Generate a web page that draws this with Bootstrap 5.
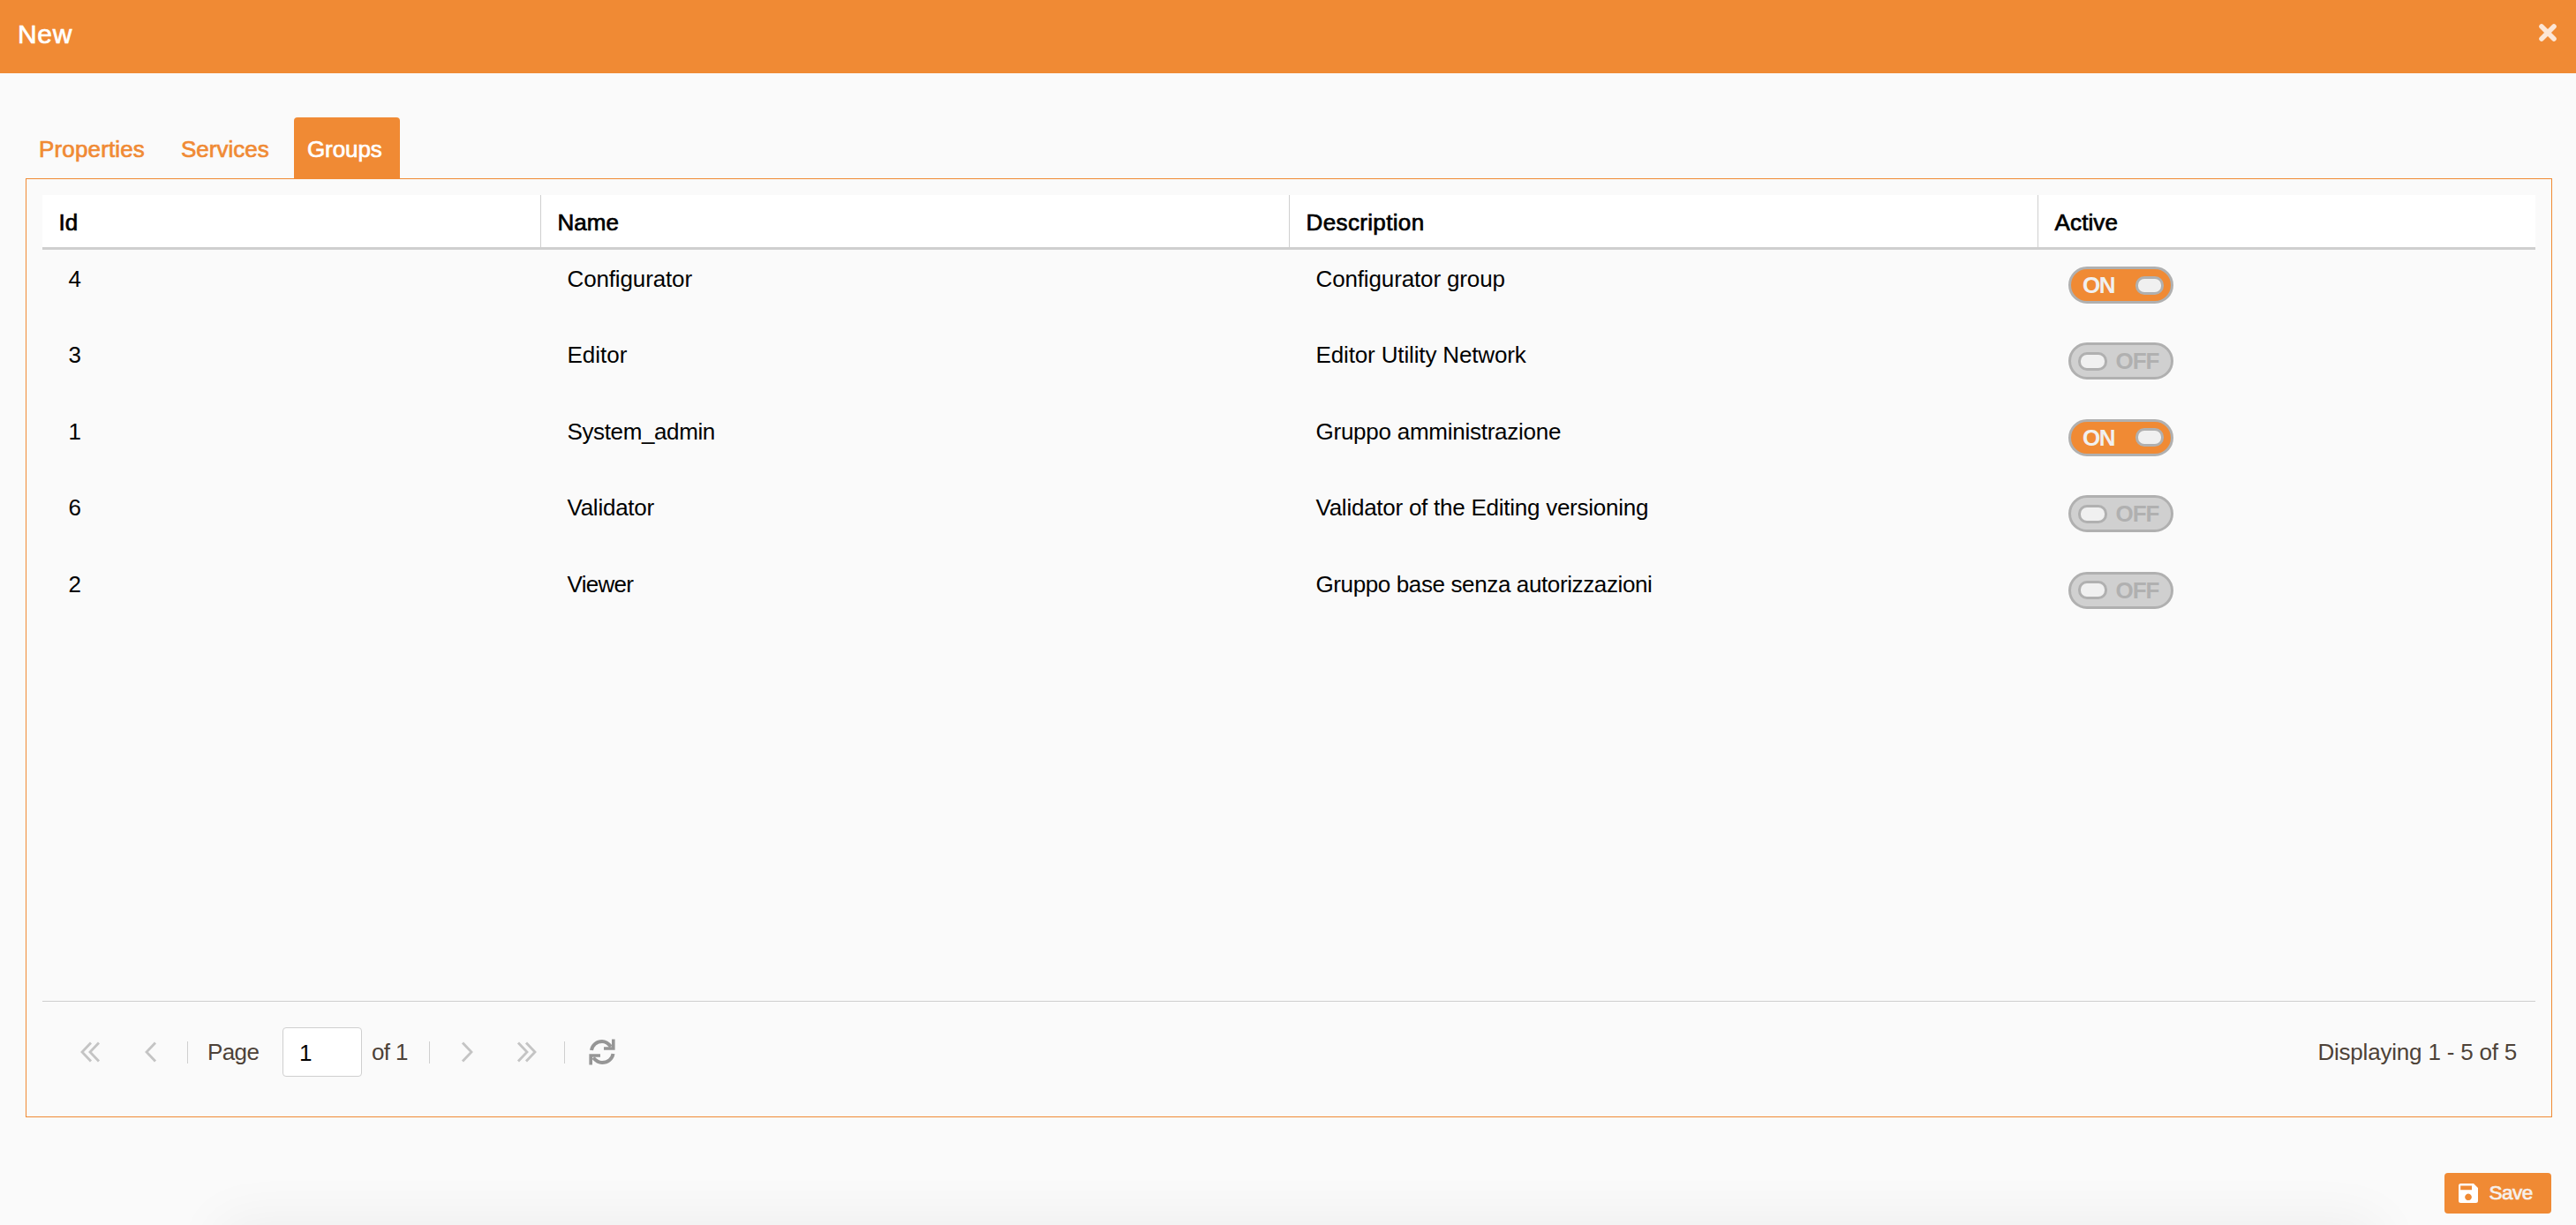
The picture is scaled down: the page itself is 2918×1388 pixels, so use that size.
<!DOCTYPE html>
<html lang="en">
<head>
<meta charset="utf-8">
<title>New</title>
<meta name="viewport" content="width=device-width, initial-scale=1">
<link href="https://cdn.jsdelivr.net/npm/bootstrap@5.3.0/dist/css/bootstrap.min.css" rel="stylesheet">
<style>
:root { --accent: #f08a34; --line: #cfcfcf; }
html, body { height: 100%; }
body { background: #fafafa; color: #000; font: 26px/30px "Liberation Sans", Arial, sans-serif; overflow: hidden; }
.window { height: 1388px; position: relative; overflow: hidden; }
.medium { -webkit-text-stroke: .7px currentColor; }
.titlebar { height: 83px; background: var(--accent); color: #fff; padding: 22px 22px 0 20px; }
.titlebar h1 { font-size: 30px; line-height: 34px; font-weight: 400; letter-spacing: .7px; }
.close-x { margin-top: 5px; width: 20px; height: 20px; }
.group-tabs { padding: 50px 0 0 29px; border: 0; }
.group-tabs .nav-link { height: 69px; margin: 0; padding: 21px 0 0 15px; border: 0; border-radius: 4px 4px 0 0; color: var(--accent); }
.group-tabs .nav-link.active { background: var(--accent); color: #fff; }
.tab-a { width: 161px; letter-spacing: .15px; }
.tab-b { width: 143px; }
.tab-c { width: 120px; letter-spacing: -.1px; }
.panel { margin: 0 27px 0 29px; height: 1064px; border: 1px solid var(--accent); padding: 18px 18px 0 18px; }
.grid-body { height: 914px; border-bottom: 1px solid var(--line); }
.group-table { table-layout: fixed; margin: 0; --bs-table-bg: transparent; color: #000; border-collapse: separate; border-spacing: 0; }
.group-table > thead > tr > th { height: 62px; padding: 16px 0 0 18.6px; font-weight: 400; vertical-align: top; background: #fff; border: 0; border-bottom: 3px solid var(--line); border-right: 1px solid var(--line); }
.group-table > thead > tr > th:last-child { border-right: 0; }
.group-table > tbody > tr > td { height: 86.4px; padding: 18px 0 0 29.5px; border: 0; vertical-align: top; letter-spacing: -.25px; }
.group-table > tbody > tr > td.ls0 { letter-spacing: 0; }
.group-table > tbody > tr > td.ls1 { letter-spacing: -.14px; }
.group-table > tbody > tr > td.ls3 { letter-spacing: -.38px; }
.group-table > tbody > tr > td.ls9 { letter-spacing: -.7px; }
.group-table > tbody > tr > td.toggle-cell { padding: 19px 0 0 34px; }
.toggle { width: 119px; height: 42px; border: 3px solid #b0b0b0; border-radius: 21px; font-weight: 700; line-height: 36px; }
.toggle .knob { width: 32px; height: 21px; border: 3px solid #b0b0b0; border-radius: 10px; background: #f0f0f0; }
.toggle.on { background: var(--accent); color: #f0f0f0; padding: 0 8px 0 13px; letter-spacing: -1.5px; }
.toggle.off { background: #d0d0d0; color: #b0b0b0; padding: 0 13.5px 0 8px; letter-spacing: -1px; }
.toggle.off .knob { width: 33px; }
.pager { height: 114px; color: #4d4238; }
.sep { width: 1px; height: 25px; background: var(--line); margin-top: 1px; }
.page-box { width: 90px; height: 56px; border: 1px solid var(--line); border-radius: 4px; padding: 2px 0 0 18px; font: 26px/30px "Liberation Sans", Arial, sans-serif; color: #000; background: #fff; }
.btn-save { width: 121px; height: 46px; margin: 63px 28px 0 auto; background: var(--accent); border-radius: 4px; padding: 0 0 0 16px; color: #f6f0ec; font-size: 22.5px; line-height: 26px; border: 0; letter-spacing: -.5px; position: relative; }
.btn-save svg { margin-right: 12.5px; }
/* soft shadow cast up from the lower edge of the window */
.under-glow { position: absolute; left: 254px; right: 229px; top: 1388px; height: 200px; box-shadow: 0 0 60px 4px rgba(0,0,0,.055); }
</style>
</head>
<body>
<div class="window">
  <div class="under-glow"></div>
  <header class="titlebar d-flex justify-content-between align-items-start">
    <h1 class="medium m-0">New</h1>
    <svg class="close-x" viewBox="0 0 20 20"><path d="M3 3 17 17M17 3 3 17" stroke="#fce6d6" stroke-width="5.6" stroke-linecap="round"/></svg>
  </header>
  <ul class="nav nav-tabs group-tabs medium">
    <li class="nav-item"><a class="nav-link tab-a">Properties</a></li>
    <li class="nav-item"><a class="nav-link tab-b">Services</a></li>
    <li class="nav-item"><a class="nav-link tab-c active">Groups</a></li>
  </ul>
  <main class="panel">
    <div class="grid-body">
      <table class="table group-table">
        <colgroup><col style="width:565px"><col style="width:848px"><col style="width:848px"><col></colgroup>
        <thead class="medium"><tr><th>Id</th><th>Name</th><th style="letter-spacing:.35px">Description</th><th style="letter-spacing:.1px">Active</th></tr></thead>
        <tbody>
          <tr><td>4</td><td class="ls1">Configurator</td><td class="ls1">Configurator group</td><td class="toggle-cell"><div class="toggle on d-flex justify-content-between align-items-center"><span>ON</span><span class="knob"></span></div></td></tr>
          <tr><td>3</td><td class="ls0">Editor</td><td class="ls1">Editor Utility Network</td><td class="toggle-cell"><div class="toggle off d-flex justify-content-between align-items-center"><span class="knob"></span><span>OFF</span></div></td></tr>
          <tr><td>1</td><td class="ls3">System_admin</td><td>Gruppo amministrazione</td><td class="toggle-cell"><div class="toggle on d-flex justify-content-between align-items-center"><span>ON</span><span class="knob"></span></div></td></tr>
          <tr><td>6</td><td>Validator</td><td>Validator of the Editing versioning</td><td class="toggle-cell"><div class="toggle off d-flex justify-content-between align-items-center"><span class="knob"></span><span>OFF</span></div></td></tr>
          <tr><td>2</td><td class="ls9">Viewer</td><td class="ls3">Gruppo base senza autorizzazioni</td><td class="toggle-cell"><div class="toggle off d-flex justify-content-between align-items-center"><span class="knob"></span><span>OFF</span></div></td></tr>
        </tbody>
      </table>
    </div>
    <footer class="pager d-flex align-items-center">
      <svg style="margin-left:42px" width="24" height="24" viewBox="0 0 24 24" fill="none" stroke="#c4c4c4" stroke-width="2.8"><path d="M13 1.5 3 12 13 22.5M22 1.5 12 12 22 22.5"/></svg>
      <svg style="margin-left:48px" width="16" height="24" viewBox="0 0 16 24" fill="none" stroke="#c4c4c4" stroke-width="2.8"><path d="M14 1.5 4 12 14 22.5"/></svg>
      <span class="sep" style="margin-left:34px"></span>
      <span style="margin-left:22px;width:85px;letter-spacing:-.6px">Page</span>
      <input class="page-box" value="1" aria-label="Page">
      <span style="margin-left:11px;width:65px;letter-spacing:-.6px">of 1</span>
      <span class="sep"></span>
      <svg style="margin-left:35px" width="16" height="24" viewBox="0 0 16 24" fill="none" stroke="#c4c4c4" stroke-width="2.8"><path d="M2 1.5 12 12 2 22.5"/></svg>
      <svg style="margin-left:47px" width="26" height="24" viewBox="0 0 26 24" fill="none" stroke="#c4c4c4" stroke-width="2.8"><path d="M2 1.5 12 12 2 22.5M11 1.5 21 12 11 22.5"/></svg>
      <span class="sep" style="margin-left:28px"></span>
      <svg style="margin-left:27px" width="30" height="30" viewBox="0 0 30 30" fill="none" stroke="#969696" stroke-width="4"><path d="M3 13C4 7 9 3 15 3C19 3 22 5 25 9M27.5 17C26.500 23 21.500 27 15 27C11 27 8 25 5 21.500"/><path d="M27.800 .5V11H17M2.200 29.500V19H13" stroke-width="3.600"/></svg>
      <span style="margin-left:auto;margin-right:21px;letter-spacing:-.2px">Displaying 1 - 5 of 5</span>
    </footer>
  </main>
  <button class="btn btn-save d-flex align-items-center medium">
    <svg width="22" height="22" viewBox="0 0 22 22"><path fill="#fff" fill-rule="evenodd" d="M2.500 0H17L22 5V19.500Q22 22 19.500 22H2.500Q0 22 0 19.500V2.500Q0 0 2.500 0ZM2.200 2.500V7.300H15V2.500ZM11 11.500a3.800 3.800 0 1 0 .01 0Z"/></svg>
    <span>Save</span>
  </button>
</div>
<script src="https://cdn.jsdelivr.net/npm/bootstrap@5.3.0/dist/js/bootstrap.bundle.min.js"></script>
</body>
</html>
